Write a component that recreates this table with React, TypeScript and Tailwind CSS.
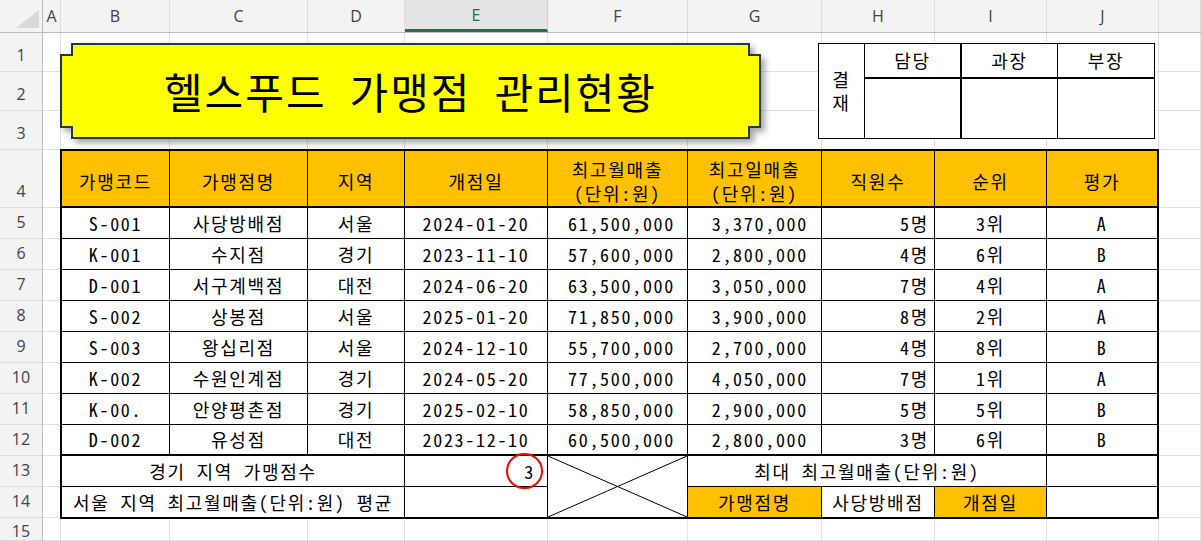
import React from "react";

const cols = [
  { name: "A", w: 18 },
  { name: "B", w: 109 },
  { name: "C", w: 138 },
  { name: "D", w: 97 },
  { name: "E", w: 143 },
  { name: "F", w: 140 },
  { name: "G", w: 134 },
  { name: "H", w: 113 },
  { name: "I", w: 112 },
  { name: "J", w: 112 },
  { name: "K", w: 42 },
];

const rowHeights = [39, 39, 39, 58, 31, 31, 31, 31, 31, 31, 31, 31, 31, 31, 23];

const stores = [
  ["S-001", "사당방배점", "서울", "2024-01-20", "61,500,000", "3,370,000", "5명", "3위", "A"],
  ["K-001", "수지점", "경기", "2023-11-10", "57,600,000", "2,800,000", "4명", "6위", "B"],
  ["D-001", "서구계백점", "대전", "2024-06-20", "63,500,000", "3,050,000", "7명", "4위", "A"],
  ["S-002", "상봉점", "서울", "2025-01-20", "71,850,000", "3,900,000", "8명", "2위", "A"],
  ["S-003", "왕십리점", "서울", "2024-12-10", "55,700,000", "2,700,000", "4명", "8위", "B"],
  ["K-002", "수원인계점", "경기", "2024-05-20", "77,500,000", "4,050,000", "7명", "1위", "A"],
  ["K-00.", "안양평촌점", "경기", "2025-02-10", "58,850,000", "2,900,000", "5명", "5위", "B"],
  ["D-002", "유성점", "대전", "2023-12-10", "60,500,000", "2,800,000", "3명", "6위", "B"],
];

// 열별 정렬 (B~J)
const align = [
  "justify-center",
  "justify-center",
  "justify-center",
  "justify-center",
  "justify-end pr-[12px]",
  "justify-end pr-[13px]",
  "justify-end pr-[5px]",
  "justify-center",
  "justify-center",
];

const cellFont = "font-['Noto_Sans_Mono_CJK_KR','Noto_Sans_CJK_KR',sans-serif] text-[18px] tracking-[1.7px] text-black";

export default function App() {
  return (
    <div className="h-[541px] w-[1201px] overflow-hidden bg-white">
      {/* 열 머리글 */}
      <div className="flex h-[33px] border-b border-[#bdbdbd] bg-[#f3f3f3] font-['Open_Sans',sans-serif] text-[16px] text-[#444]">
        <div className="relative w-[43px] shrink-0 border-r border-[#bdbdbd]">
          <svg className="absolute left-[16px] top-[10px]" width="24" height="19" viewBox="0 0 24 19">
            <polygon points="23,0 23,18 0,18" fill="#d9d9d9" />
          </svg>
        </div>
        {cols.map((c) => (
          <div
            key={c.name}
            style={{ width: c.w }}
            className={
              c.name === "E"
                ? "flex shrink-0 items-center justify-center border-r border-b-[3px] border-r-[#d0d0d0] border-b-[#217346] bg-[#e4e4e4] pt-[1px] text-[#1e6b45]"
                : "flex shrink-0 items-center justify-center border-r border-[#dcdcdc]"
            }
          >
            {c.name === "K" ? "" : c.name}
          </div>
        ))}
      </div>

      <div className="flex">
        {/* 행 머리글 */}
        <div className="w-[43px] shrink-0 border-r border-[#bdbdbd] bg-[#f3f3f3] font-['Open_Sans',sans-serif] text-[16px] text-[#444]">
          {rowHeights.map((h, i) => (
            <div
              key={i}
              style={{ height: h }}
              className={`flex justify-center border-b border-[#dcdcdc] ${i === 14 ? "items-start pt-px" : "items-end pb-[4px]"}`}
            >
              {i + 1}
            </div>
          ))}
        </div>

        {/* 시트 */}
        <div className="grid grid-cols-[18px_109px_138px_97px_143px_140px_134px_113px_112px_112px_42px] grid-rows-[39px_39px_39px_58px_repeat(10,31px)_23px]">
          {rowHeights.map((_, r) =>
            cols.map((c, ci) => (
              <div
                key={`${r}-${c.name}`}
                style={{ gridRow: r + 1, gridColumn: ci + 1 }}
                className="border-r border-b border-[#e1e1e1]"
              />
            ))
          )}

          {/* 제목 도형 */}
          <div className="relative col-start-2 col-end-7 row-start-1 row-end-4 -ml-px mt-[10px] h-[96px] w-[701px] self-start">
            <svg
              className="absolute inset-0 [filter:drop-shadow(4px_4px_3px_rgba(0,0,0,0.35))]"
              width="701"
              height="96"
              viewBox="0 0 701 96"
            >
              <path
                d="M12,1 H689 V12 H700 V84 H689 V95 H12 V84 H1 V12 H12 Z"
                fill="#ffff00"
                stroke="#263548"
                strokeWidth="2"
              />
            </svg>
            <div className="relative flex h-full items-center justify-center pb-[2px] font-['Noto_Sans_Mono_CJK_KR','Noto_Sans_CJK_KR',sans-serif] text-[42px] tracking-[2px] text-black">
              헬스푸드 가맹점 관리현황
            </div>
          </div>

          {/* 결재란 */}
          <div className={`col-start-8 col-end-11 row-start-1 row-end-4 -ml-[4px] mt-[10px] grid h-[96px] w-[337px] grid-cols-[46px_97px_96px_96px] grid-rows-[35px_59px] self-start border border-black bg-white ${cellFont}`}>
            <div className="row-span-2 flex flex-col items-center justify-center border-r border-black leading-[23px]">
              <span>결</span>
              <span>재</span>
            </div>
            <div className="flex items-center justify-center border-r-2 border-b-2 border-black">담당</div>
            <div className="flex items-center justify-center border-r border-b-2 border-black">과장</div>
            <div className="flex items-center justify-center border-b-2 border-black">부장</div>
            <div className="border-r-2 border-black" />
            <div className="border-r border-black" />
            <div />
          </div>

          {/* 관리현황 표 */}
          <div className={`col-start-2 col-end-11 row-start-4 row-end-15 -ml-px -mt-px grid h-[370px] w-[1099px] grid-cols-[108px_138px_97px_143px_140px_134px_113px_112px_110px] grid-rows-[57px_repeat(9,31px)_30px] self-start border-2 border-black bg-white ${cellFont}`}>
            {[
              ["가맹코드"],
              ["가맹점명"],
              ["지역"],
              ["개점일"],
              ["최고월매출", "(단위:원)"],
              ["최고일매출", "(단위:원)"],
              ["직원수"],
              ["순위"],
              ["평가"],
            ].map((lines, i) => (
              <div
                key={i}
                className={`flex flex-col items-center justify-center border-b-2 border-black bg-[#ffc000] leading-[24px] ${i < 8 ? "border-r" : ""} ${lines.length === 1 ? "pt-[4px]" : "pt-[4px]"}`}
              >
                {lines.map((l) => (
                  <span key={l}>{l}</span>
                ))}
              </div>
            ))}

            {stores.map((row, r) =>
              row.map((v, i) => (
                <div
                  key={`${r}-${i}`}
                  className={`flex items-center border-black ${align[i]} ${i < 8 ? "border-r" : ""} ${r === stores.length - 1 ? "border-b-2" : "border-b"}`}
                >
                  {v}
                </div>
              ))
            )}

            {/* 13행 */}
            <div className="col-span-3 flex items-center justify-center border-r border-b border-black">경기 지역 가맹점수</div>
            <div className="relative flex items-center justify-end border-r border-b border-black pr-[12px]">
              3
              <span className="absolute left-[101px] top-[-3px] h-[36px] w-[37px] rounded-full border-2 border-[#ff0000]" />
            </div>
            <div className="relative row-span-2 border-r border-black">
              <svg className="absolute inset-0 h-full w-full" preserveAspectRatio="none" viewBox="0 0 100 100">
                <line x1="0" y1="0" x2="100" y2="100" stroke="black" strokeWidth="1" vectorEffect="non-scaling-stroke" />
                <line x1="100" y1="0" x2="0" y2="100" stroke="black" strokeWidth="1" vectorEffect="non-scaling-stroke" />
              </svg>
            </div>
            <div className="col-span-3 flex items-center justify-center border-r border-b border-black">최대 최고월매출(단위:원)</div>
            <div className="border-b border-black" />

            {/* 14행 */}
            <div className="col-span-3 flex items-center justify-center border-r border-black">서울 지역 최고월매출(단위:원) 평균</div>
            <div className="border-r border-black" />
            <div className="flex items-center justify-center border-r border-black bg-[#ffc000]">가맹점명</div>
            <div className="flex items-center justify-center border-r border-black">사당방배점</div>
            <div className="flex items-center justify-center border-r border-black bg-[#ffc000]">개점일</div>
            <div />
          </div>
        </div>
      </div>
    </div>
  );
}
